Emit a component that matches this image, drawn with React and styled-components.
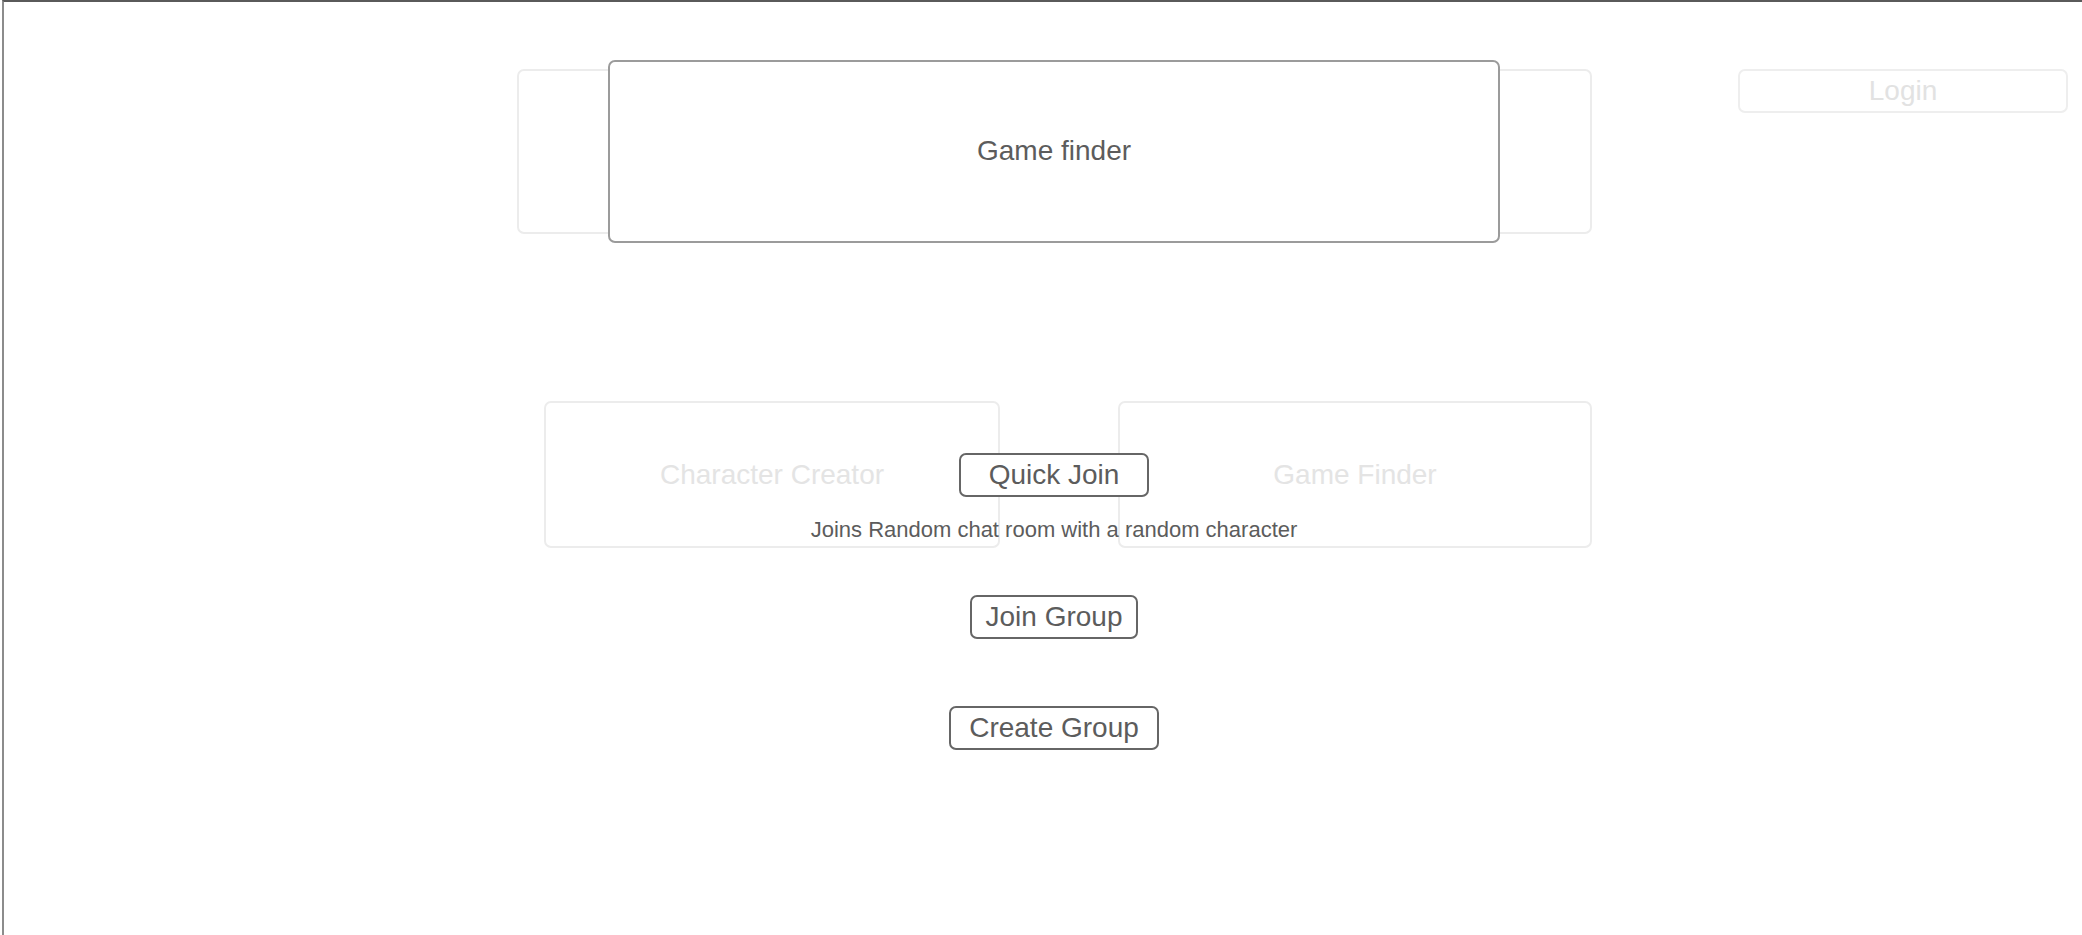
import styled, {createGlobalStyle} from "styled-components"

const GlobalStyle = createGlobalStyle`
    html, body {
        margin: 0;
        padding: 0;
        background: #fff;
    }
    * {
        box-sizing: border-box;
    }
    body {
        font-family: "Liberation Sans", Arial, sans-serif;
        color: #5c5c5c;
    }
`

const Frame = styled.div`
    margin-left: 2px;
    min-height: 100vh;
    border-top: 2px solid #5a5a5a;
    border-left: 2px solid #8c8c8c;
    overflow: hidden;
`

const TopSection = styled.header`
    display: flex;
    align-items: flex-start;
    padding-top: 58px;
`

// two layers sharing one grid cell: the faded card and the one fading in over it
const Stack = styled.div`
    display: grid;
    margin-left: ${({$left}) => $left}px;
    width: ${({$width}) => $width ? `${$width}px` : "auto"};

    > * {
        grid-area: 1 / 1;
    }
`

const GhostCard = styled.div`
    width: ${({$w}) => $w}px;
    height: ${({$h}) => $h}px;
    margin-top: ${({$top}) => $top || 0}px;
    border: 2px solid #ececec;
    border-radius: 7px;
    display: flex;
    align-items: center;
    justify-content: center;
    font-size: 28px;
    color: #e4e4e4;
`

const HeroCard = styled.div`
    width: 892px;
    height: 183px;
    margin-left: 91px;
    border: 2px solid #9b9b9b;
    border-radius: 7px;
    background: #fff;
    display: flex;
    align-items: center;
    justify-content: center;
    font-size: 28px;
    color: #5c5c5c;
    padding-bottom: 2px;
`

const LoginButton = styled.button`
    margin-left: 146px;
    margin-top: 9px;
    width: 330px;
    height: 44px;
    border: 2px solid #eeeeee;
    border-radius: 7px;
    background: #fff;
    font-family: inherit;
    font-size: 28px;
    color: #e2e2e2;
    padding: 0;
`

const MidStack = styled(Stack)`
    margin-top: 158px;
`

const CardRow = styled.div`
    display: flex;
    gap: 118px;
    padding-left: 540px;
    align-self: start;
`

const Actions = styled.div`
    display: flex;
    flex-direction: column;
    align-items: center;
    width: 600px;
    margin-left: 750px;
    padding-top: 52px;
    align-self: start;
`

const Button = styled.button`
    height: 44px;
    margin-top: ${({$mt}) => $mt || 0}px;
    padding: 0 ${({$px}) => $px}px;
    border: 2px solid #666;
    border-radius: 7px;
    background: #fff;
    font-family: inherit;
    font-size: 28px;
    line-height: 40px;
    color: #5c5c5c;
    white-space: nowrap;
`

const Hint = styled.p`
    margin: 20px 0 0;
    font-size: 22px;
    line-height: 25px;
    color: #5c5c5c;
    white-space: nowrap;
`

export default function App() {
    return (
        <>
            <GlobalStyle />
            <Frame>
                <TopSection>
                    <Stack $left={513} $width={1075}>
                        <GhostCard $w={1075} $h={165} $top={9} />
                        <HeroCard>Game finder</HeroCard>
                    </Stack>
                    <LoginButton>Login</LoginButton>
                </TopSection>

                <MidStack $left={0}>
                    <CardRow>
                        <GhostCard $w={456} $h={147}>Character Creator</GhostCard>
                        <GhostCard $w={474} $h={147}>Game Finder</GhostCard>
                    </CardRow>
                    <Actions>
                        <Button $px={28}>Quick Join</Button>
                        <Hint>Joins Random chat room with a random character</Hint>
                        <Button $px={14} $mt={53}>Join Group</Button>
                        <Button $px={18} $mt={67}>Create Group</Button>
                    </Actions>
                </MidStack>
            </Frame>
        </>
    )
}
